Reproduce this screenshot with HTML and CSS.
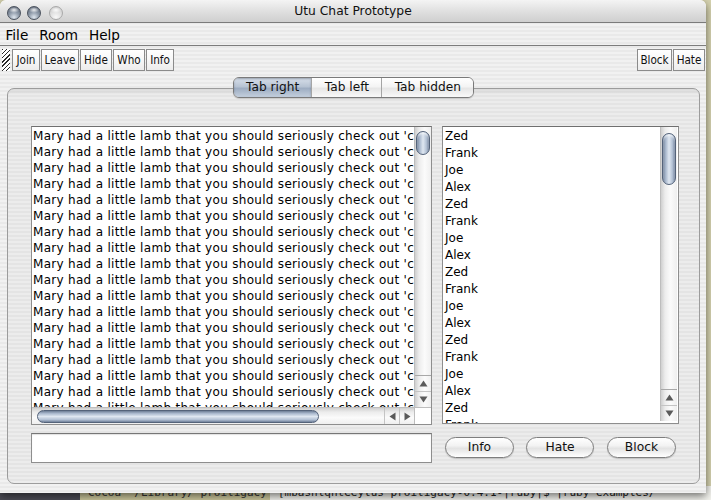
FILE: index.html
```html
<!DOCTYPE html>
<html>
<head>
<meta charset="utf-8">
<title>Utu Chat Prototype</title>
<link rel="stylesheet" href="styles.css">
</head>
<body>
<div class="desktop">
  <div class="term">
    <div class="term-a"></div>
    <div class="term-b">Cocoa  ~/Library/ proiligacy   ~/</div>
    <div class="term-c">[mbashlqhteeylus proiligacy-0.4.1-|ruby|$ |ruby examples/</div>
  </div>
</div>

<div class="window">
  <div class="titlebar">
    <div class="lights">
      <span class="light dark"></span>
      <span class="light dark"></span>
      <span class="light off"></span>
    </div>
    <div class="title">Utu Chat Prototype</div>
  </div>

  <div class="menubar">
    <span class="menu">File</span>
    <span class="menu">Room</span>
    <span class="menu">Help</span>
  </div>

  <div class="toolbar">
    <div class="grip"></div>
    <button class="tbtn w-join">Join</button>
    <button class="tbtn w-leave">Leave</button>
    <button class="tbtn w-hide">Hide</button>
    <button class="tbtn w-who">Who</button>
    <button class="tbtn w-info">Info</button>
    <div class="spacer"></div>
    <button class="tbtn w-block">Block</button>
    <button class="tbtn w-hate">Hate</button>
  </div>

  <div class="tabarea">
    <div class="tabs">
      <span class="tab selected">Tab right</span>
      <span class="tab">Tab left</span>
      <span class="tab">Tab hidden</span>
    </div>
    <div class="panel">
      <div class="content-row">
        <div class="textbox">
          <div class="lines">
            <div class="line">Mary had a little lamb that you should seriously check out 'c</div>
            <div class="line">Mary had a little lamb that you should seriously check out 'c</div>
            <div class="line">Mary had a little lamb that you should seriously check out 'c</div>
            <div class="line">Mary had a little lamb that you should seriously check out 'c</div>
            <div class="line">Mary had a little lamb that you should seriously check out 'c</div>
            <div class="line">Mary had a little lamb that you should seriously check out 'c</div>
            <div class="line">Mary had a little lamb that you should seriously check out 'c</div>
            <div class="line">Mary had a little lamb that you should seriously check out 'c</div>
            <div class="line">Mary had a little lamb that you should seriously check out 'c</div>
            <div class="line">Mary had a little lamb that you should seriously check out 'c</div>
            <div class="line">Mary had a little lamb that you should seriously check out 'c</div>
            <div class="line">Mary had a little lamb that you should seriously check out 'c</div>
            <div class="line">Mary had a little lamb that you should seriously check out 'c</div>
            <div class="line">Mary had a little lamb that you should seriously check out 'c</div>
            <div class="line">Mary had a little lamb that you should seriously check out 'c</div>
            <div class="line">Mary had a little lamb that you should seriously check out 'c</div>
            <div class="line">Mary had a little lamb that you should seriously check out 'c</div>
            <div class="line">Mary had a little lamb that you should seriously check out 'c</div>
          </div>
          <div class="vscroll">
            <div class="vthumb small"></div>
            <div class="track-fill"></div>
            <div class="arrow up"><svg width="9" height="7" viewBox="0 0 9 7"><path d="M4.5 0.5 L8.5 6.5 L0.5 6.5 Z" fill="#5a5a5a"/></svg></div>
            <div class="arrow down"><svg width="9" height="7" viewBox="0 0 9 7"><path d="M0.5 0.5 L8.5 0.5 L4.5 6.5 Z" fill="#5a5a5a"/></svg></div>
          </div>
          <div class="hscroll">
            <div class="hthumb"></div>
            <div class="track-fill"></div>
            <div class="harrow"><svg width="7" height="9" viewBox="0 0 7 9"><path d="M0.5 4.5 L6.5 0.5 L6.5 8.5 Z" fill="#5a5a5a"/></svg></div>
            <div class="harrow"><svg width="7" height="9" viewBox="0 0 7 9"><path d="M0.5 0.5 L6.5 4.5 L0.5 8.5 Z" fill="#5a5a5a"/></svg></div>
          </div>
          <div class="corner"></div>
        </div>

        <div class="listbox">
          <div class="items">
            <div class="item">Zed</div>
            <div class="item">Frank</div>
            <div class="item">Joe</div>
            <div class="item">Alex</div>
            <div class="item">Zed</div>
            <div class="item">Frank</div>
            <div class="item">Joe</div>
            <div class="item">Alex</div>
            <div class="item">Zed</div>
            <div class="item">Frank</div>
            <div class="item">Joe</div>
            <div class="item">Alex</div>
            <div class="item">Zed</div>
            <div class="item">Frank</div>
            <div class="item">Joe</div>
            <div class="item">Alex</div>
            <div class="item">Zed</div>
            <div class="item">Frank</div>
          </div>
          <div class="vscroll list-scroll">
            <div class="vthumb big"></div>
            <div class="track-fill"></div>
            <div class="arrow up"><svg width="9" height="7" viewBox="0 0 9 7"><path d="M4.5 0.5 L8.5 6.5 L0.5 6.5 Z" fill="#5a5a5a"/></svg></div>
            <div class="arrow down"><svg width="9" height="7" viewBox="0 0 9 7"><path d="M0.5 0.5 L8.5 0.5 L4.5 6.5 Z" fill="#5a5a5a"/></svg></div>
          </div>
        </div>
      </div>

      <div class="input-row">
        <div class="input"></div>
        <button class="pill info">Info</button>
        <button class="pill hate">Hate</button>
        <button class="pill block">Block</button>
      </div>
    </div>
  </div>
</div>
</body>
</html>
```

FILE: styles.css
```css
html, body {
  margin: 0;
  padding: 0;
}

body {
  width: 711px;
  height: 500px;
  overflow: hidden;
  position: relative;
  background: #d6d3b0;
  font-family: "DejaVu Sans", "Liberation Sans", sans-serif;
  color: #000;
}

/* desktop behind the window */
.desktop {
  height: 500px;
  display: flex;
  flex-direction: column;
  justify-content: flex-end;
}

.term {
  display: flex;
  height: 14px;
  font: 11px/14px "DejaVu Sans Mono", "Liberation Mono", monospace;
  white-space: nowrap;
  overflow: hidden;
}

.term-a {
  width: 80px;
  background: #4c4c55;
}

.term-b {
  width: 190px;
  background: #cbc79c;
  color: #333;
  padding-left: 8px;
  box-sizing: border-box;
  overflow: hidden;
}

.term-c {
  flex: 1;
  background: #f3f3ee;
  color: #222;
  padding-left: 8px;
  overflow: hidden;
}

/* window */
.window {
  position: absolute;
  left: 0;
  top: 0;
  width: 706px;
  height: 493px;
  display: flex;
  flex-direction: column;
  border-radius: 6px 6px 0 0;
  box-shadow: 0 3px 9px rgba(0, 0, 0, 0.55);
  background: repeating-linear-gradient(180deg, #f1f1f1 0 2px, #e9e9e9 2px 4px);
  overflow: hidden;
}

.titlebar {
  height: 22px;
  flex: none;
  display: flex;
  align-items: center;
  position: relative;
  background: linear-gradient(180deg, #f4f4f4 0%, #e2e2e2 45%, #cfcfcf 100%);
  border-bottom: 1px solid #7b7b7b;
  border-radius: 6px 6px 0 0;
}

.lights {
  display: flex;
  gap: 6px;
  padding-left: 7px;
  padding-top: 4px;
}

.light {
  width: 14px;
  height: 14px;
  border-radius: 50%;
  box-sizing: border-box;
}

.light.dark {
  border: 1px solid #4a525e;
  background:
    radial-gradient(ellipse 5px 3px at 50% 25%, rgba(255,255,255,0.85), rgba(255,255,255,0) 100%),
    radial-gradient(circle at 50% 85%, #dfe6ee 0%, #8d99a8 45%, #545d6c 100%);
}

.light.off {
  margin-left: 2px;
  border: 1px solid #a9a9a9;
  background:
    radial-gradient(ellipse 5px 3px at 50% 25%, rgba(255,255,255,0.9), rgba(255,255,255,0) 100%),
    radial-gradient(circle at 50% 85%, #f8f8f8 0%, #dcdcdc 55%, #c4c4c4 100%);
}

.title {
  position: absolute;
  left: 0;
  right: 0;
  top: 0;
  line-height: 22px;
  text-align: center;
  font-size: 12.3px;
  color: #111;
  pointer-events: none;
}

.menubar {
  height: 21px;
  flex: none;
  display: flex;
  align-items: center;
  border-bottom: 1px solid #7d7d7d;
  font-size: 13.6px;
  padding-top: 1px;
}

.menu {
  padding: 0 5.5px;
}

.toolbar {
  flex: none;
  display: flex;
  align-items: center;
  gap: 1px;
  padding: 3px 1px 3px 2px;
  height: 22px;
}

.grip {
  width: 8px;
  height: 22px;
  margin-right: 1px;
  background: repeating-linear-gradient(135deg, #2a2a2a 0 1px, #ffffff 1px 3px);
}

.spacer {
  flex: 1;
}

.tbtn {
  height: 22px;
  margin: 0;
  padding: 0;
  border: 1px solid #8b8b8b;
  border-radius: 0;
  background: linear-gradient(180deg, #ffffff 0%, #f7f7f7 50%, #ececec 100%);
  font-family: "DejaVu Sans Condensed", "DejaVu Sans", sans-serif;
  font-size: 11.6px;
  color: #111;
  line-height: 20px;
  text-align: center;
}

.w-join { width: 28px; }
.w-leave { width: 38px; }
.w-hide { width: 32px; }
.w-who { width: 32px; }
.w-info { width: 28px; }
.w-block { width: 35px; }
.w-hate { width: 32px; }

/* tabs */
.tabarea {
  flex: 1;
  display: flex;
  flex-direction: column;
  padding: 3px 6px 9px 7px;
}

.tabs {
  align-self: center;
  display: flex;
  position: relative;
  z-index: 1;
  margin-bottom: -10px;
  border: 1px solid #7a7a7a;
  border-radius: 6px;
  overflow: hidden;
  box-shadow: 0 1px 1px rgba(0,0,0,0.15);
  font-size: 12.2px;
}

.tab {
  height: 19px;
  line-height: 19px;
  padding: 0 12.3px;
  background: linear-gradient(180deg, #ffffff 0%, #f4f4f4 45%, #e6e6e6 55%, #f9f9f9 100%);
  border-left: 1px solid #a5a5a5;
  color: #111;
}

.tab:first-child {
  border-left: none;
}

.tab.selected {
  background: linear-gradient(180deg, #d8e0ea 0%, #b7c3d3 45%, #9eadc2 55%, #c3cfdd 100%);
  box-shadow: inset 0 1px 2px rgba(40,50,70,0.35);
}

.panel {
  flex: 1;
  display: flex;
  flex-direction: column;
  border: 1px solid #9c9c9c;
  border-radius: 7px;
  padding: 37px 20px 19px 23px;
  background:
    linear-gradient(180deg, rgba(0,0,0,0.07) 0, rgba(0,0,0,0) 6px),
    repeating-linear-gradient(180deg, #ececec 0 2px, #e4e4e4 2px 4px);
}

.content-row {
  display: flex;
  gap: 10px;
  height: 299px;
}

/* text area */
.textbox {
  width: 401px;
  box-sizing: border-box;
  display: grid;
  grid-template-columns: 1fr 17px;
  grid-template-rows: 1fr 17px;
  border: 1px solid #8e8e8e;
  border-top-color: #6f6f6f;
  background: #fff;
}

.lines {
  overflow: hidden;
  padding: 1px 0 0 1px;
  font-size: 12px;
  line-height: 16px;
  letter-spacing: 0.3px;
}

.line {
  white-space: nowrap;
}

.vscroll {
  display: flex;
  flex-direction: column;
  border-left: 1px solid #bdbdbd;
  background: linear-gradient(90deg, #cfcfcf 0%, #ececec 25%, #fbfbfb 60%, #efefef 100%);
}

.track-fill {
  flex: 1;
}

.vthumb {
  margin: 4px 1px 0 1px;
  border: 1px solid #54637a;
  border-radius: 7px;
  background:
    linear-gradient(90deg, #6e7e96 0%, #a9b8cd 22%, #dfe7f1 50%, #b4c2d5 78%, #70809a 100%);
  box-shadow: inset 0 2px 2px rgba(255,255,255,0.6);
}

.vthumb.small {
  height: 22px;
}

.vthumb.big {
  height: 50px;
  margin-top: 6px;
}

.arrow {
  height: 15px;
  display: flex;
  align-items: center;
  justify-content: center;
  border-top: 1px solid #c4c4c4;
}

.arrow.up {
  border-top: 1px solid #a8a8a8;
}

.hscroll {
  display: flex;
  align-items: center;
  border-top: 1px solid #bdbdbd;
  background: linear-gradient(180deg, #cfcfcf 0%, #ececec 25%, #fbfbfb 60%, #efefef 100%);
}

.hthumb {
  width: 282px;
  height: 13px;
  margin-left: 5px;
  box-sizing: border-box;
  border: 1px solid #54637a;
  border-radius: 7px;
  background:
    linear-gradient(180deg, #6e7e96 0%, #a9b8cd 22%, #dfe7f1 50%, #b4c2d5 78%, #70809a 100%);
}

.harrow {
  width: 14px;
  height: 16px;
  display: flex;
  align-items: center;
  justify-content: center;
  border-left: 1px solid #c4c4c4;
}

.corner {
  background: #fff;
  border-left: 1px solid #bdbdbd;
  border-top: 1px solid #bdbdbd;
}

/* list */
.listbox {
  width: 237px;
  height: 298px;
  box-sizing: border-box;
  display: flex;
  border: 1px solid #8e8e8e;
  border-top-color: #6f6f6f;
  background: #fff;
}

.items {
  flex: 1;
  overflow: hidden;
  padding: 1px 0 0 2px;
  font-size: 12px;
  line-height: 17px;
}

.list-scroll {
  width: 16px;
  flex: none;
  margin-right: 1px;
  margin-bottom: 2px;
}

/* bottom row */
.input-row {
  display: flex;
  align-items: center;
  margin-top: 8px;
  height: 30px;
}

.input {
  width: 401px;
  height: 30px;
  box-sizing: border-box;
  border: 1px solid #8e8e8e;
  border-top-color: #767676;
  background: #fff;
  box-shadow: inset 0 1px 1px rgba(0,0,0,0.12);
}

.pill {
  height: 21px;
  margin: 0 0 1px 0;
  padding: 0;
  border: 1px solid #7e7e7e;
  border-radius: 11px;
  background: linear-gradient(180deg, #ffffff 0%, #f3f3f3 40%, #e3e3e3 55%, #f6f6f6 85%, #ffffff 100%);
  box-shadow: 0 1px 1px rgba(0,0,0,0.18);
  font-family: "DejaVu Sans", sans-serif;
  font-size: 12.3px;
  color: #111;
  line-height: 19px;
}

.pill.info {
  width: 69px;
  margin-left: 13px;
}

.pill.hate {
  width: 68px;
  margin-left: 12px;
}

.pill.block {
  width: 69px;
  margin-left: 13px;
}
```
